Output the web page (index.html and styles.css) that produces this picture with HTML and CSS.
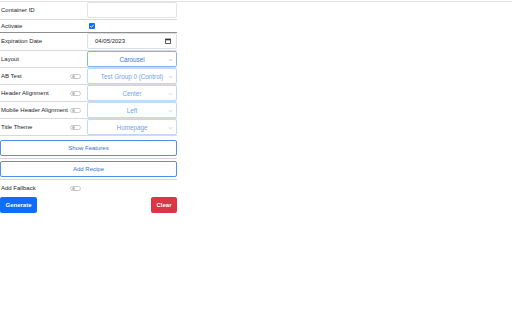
FILE: index.html
```html
<!DOCTYPE html>
<html>
<head>
<meta charset="utf-8">
<title>Container Form</title>
<link rel="stylesheet" href="styles.css">
</head>
<body>
<div class="topline"></div>
<form class="form">
  <div class="row row-tall">
    <span class="label label-wide">Container ID</span>
    <div class="field"></div>
  </div>
  <div class="row row-check">
    <span class="label label-wide">Activate</span>
    <span class="check"><svg viewBox="0 0 6 6" width="6" height="6"><path d="M1.3 3.1 L2.5 4.3 L4.7 1.8" fill="none" stroke="#fff" stroke-width="0.9"/></svg></span>
  </div>
  <div class="row row-tall">
    <span class="label label-wide">Expiration Date</span>
    <div class="field field-date">
      <span class="date-text">04/05/2023</span>
      <svg class="cal" viewBox="0 0 6 6" width="6" height="6"><rect x="0.6" y="1" width="4.8" height="4.4" fill="none" stroke="#333" stroke-width="0.8"/><rect x="0.6" y="1" width="4.8" height="1.3" fill="#333"/></svg>
    </div>
  </div>
  <div class="row">
    <span class="label label-wide">Layout</span>
    <div class="select select-active"><span class="sel-text">Carousel</span><svg class="chev" viewBox="0 0 6 4" width="5" height="4"><path d="M1 1 L3 3 L5 1" fill="none" stroke="#8a9bb5" stroke-width="0.7"/></svg></div>
  </div>
  <div class="row">
    <span class="label">AB Test</span>
    <span class="toggle-cell"><span class="toggle"><span class="knob"></span></span></span>
    <div class="select"><span class="sel-text">Test Group 0 (Control)</span><svg class="chev" viewBox="0 0 6 4" width="5" height="4"><path d="M1 1 L3 3 L5 1" fill="none" stroke="#a5b4ca" stroke-width="0.7"/></svg></div>
  </div>
  <div class="row">
    <span class="label">Header Alignment</span>
    <span class="toggle-cell"><span class="toggle"><span class="knob"></span></span></span>
    <div class="select"><span class="sel-text">Center</span><svg class="chev" viewBox="0 0 6 4" width="5" height="4"><path d="M1 1 L3 3 L5 1" fill="none" stroke="#a5b4ca" stroke-width="0.7"/></svg></div>
  </div>
  <div class="row">
    <span class="label">Mobile Header Alignment</span>
    <span class="toggle-cell"><span class="toggle"><span class="knob"></span></span></span>
    <div class="select"><span class="sel-text">Left</span><svg class="chev" viewBox="0 0 6 4" width="5" height="4"><path d="M1 1 L3 3 L5 1" fill="none" stroke="#a5b4ca" stroke-width="0.7"/></svg></div>
  </div>
  <div class="row">
    <span class="label">Title Theme</span>
    <span class="toggle-cell"><span class="toggle"><span class="knob"></span></span></span>
    <div class="select"><span class="sel-text">Homepage</span><svg class="chev" viewBox="0 0 6 4" width="5" height="4"><path d="M1 1 L3 3 L5 1" fill="none" stroke="#a5b4ca" stroke-width="0.7"/></svg></div>
  </div>
  <button type="button" class="btn-outline btn-first">Show Features</button>
  <div class="sep"></div>
  <button type="button" class="btn-outline">Add Recipe</button>
  <div class="sep"></div>
  <div class="row row-plain">
    <span class="label">Add Fallback</span>
    <span class="toggle-cell"><span class="toggle"><span class="knob"></span></span></span>
  </div>
  <div class="actions">
    <button type="button" class="btn btn-primary">Generate</button>
    <button type="button" class="btn btn-danger">Clear</button>
  </div>
</form>
</body>
</html>
```
FILE: styles.css
```css
body {
  margin: 0;
  background: #fff;
  font-family: "Liberation Sans", Arial, sans-serif;
  font-size: 6px;
  color: #212529;
}
.topline {
  height: 1px;
  margin-top: 1px;
  background: #e4e4e4;
}
.form {
  width: 177px;
  display: flex;
  flex-direction: column;
}
.row {
  display: flex;
  align-items: center;
  height: 17px;
  box-sizing: border-box;
  border-bottom: 1px solid #d9d9d9;
}
.row-tall {
  height: 18px;
  align-items: flex-start;
}
.row-check {
  height: 13px;
  border-bottom-color: #8e8e8e;
}
.row-plain {
  border-bottom: none;
  height: 14px;
  margin-top: 1px;
}
.label {
  width: 69px;
  padding-left: 1px;
  white-space: nowrap;
  line-height: 16px;
}
.label-wide {
  width: 86px;
}
.toggle-cell {
  width: 17px;
  display: flex;
  align-items: center;
}
.toggle {
  width: 11px;
  height: 5px;
  border: 0.5px solid #c8c8c8;
  border-radius: 3px;
  display: flex;
  align-items: center;
  padding-left: 1px;
  box-sizing: border-box;
}
.knob {
  width: 3px;
  height: 3px;
  border-radius: 50%;
  background: #bdbdbd;
}
.field {
  width: 90px;
  height: 16px;
  box-sizing: border-box;
  border: 1px solid #e2e5e8;
  border-radius: 2px;
  background: #fff;
}
.field-date {
  display: flex;
  align-items: center;
  justify-content: space-between;
  padding: 0 5px 0 7px;
  border-color: #dcdfe3;
}
.date-text {
  color: #212529;
}
.check {
  width: 6px;
  height: 6px;
  margin-left: 2px;
  border-radius: 1px;
  background: #0d6efd;
  display: flex;
}
.select {
  width: 90px;
  height: 16px;
  box-sizing: border-box;
  border: 1px solid #c2d8f8;
  border-radius: 2px;
  display: flex;
  align-items: center;
  position: relative;
  color: #6ea2ea;
  font-size: 6.3px;
}
.select-active {
  border-color: #86b2ef;
  color: #3b78d4;
}
.sel-text {
  flex: 1;
  text-align: center;
}
.chev {
  position: absolute;
  right: 3px;
  top: 6px;
}
.btn-outline {
  margin: 4px 0 0;
  height: 16px;
  width: 177px;
  padding: 0;
  border: 1px solid #4f8ff0;
  border-radius: 2px;
  background: #fff;
  color: #2f72d6;
  font-family: inherit;
  font-size: 6px;
}
.btn-outline + .sep + .btn-outline {
  margin-top: 2px;
}
.sep {
  height: 1px;
  margin-top: 2px;
  background: #d6d6d6;
}
.actions {
  display: flex;
  justify-content: space-between;
  margin-top: 2px;
}
.btn {
  height: 16px;
  padding: 0 5px;
  border: none;
  border-radius: 2px;
  color: #fff;
  font-family: inherit;
  font-size: 6px;
  font-weight: bold;
}
.btn-primary {
  width: 37px;
  background: #0d6efd;
}
.btn-danger {
  width: 26px;
  background: #dc3545;
}
```
